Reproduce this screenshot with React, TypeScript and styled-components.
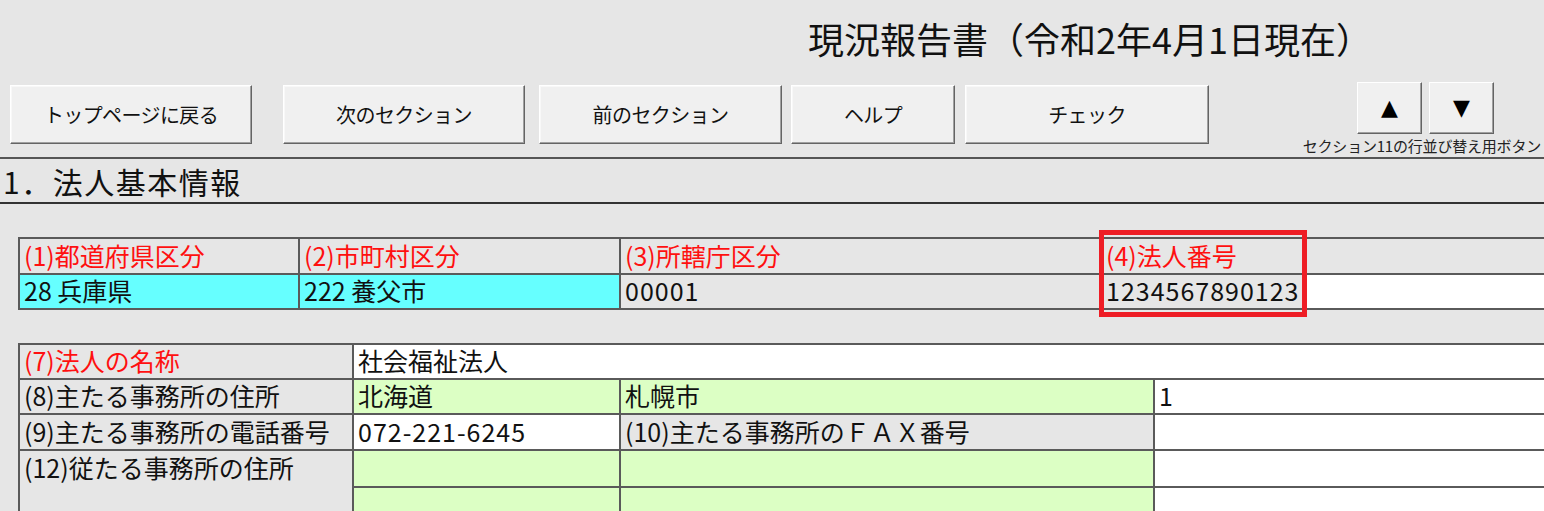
import React from "react";
import styled, { createGlobalStyle } from "styled-components";

const Global = createGlobalStyle`
  html, body { margin: 0; padding: 0; background: #e6e6e6; overflow: hidden; }
  body { font-family: "Noto Sans CJK JP", "Noto Sans", sans-serif; color: #111; }
  * { box-sizing: border-box; }
`;

const Page = styled.div`
  width: 1544px;
  height: 511px;
  overflow: hidden;
  display: flex;
  flex-direction: column;
  & > * { flex-shrink: 0; }
`;

const TitleBar = styled.div`
  height: 75px;
  display: flex;
  align-items: center;
  padding-left: 808px;
`;

const Title = styled.h1`
  margin: 0;
  font-size: 36px;
  font-weight: 400;
  line-height: 1;
  white-space: nowrap;
`;

const Toolbar = styled.div`
  height: 82px;
  display: flex;
  align-items: flex-start;
`;

const XButton = styled.button<{ $w: number; $ml: number }>`
  width: ${(p) => p.$w}px;
  margin-left: ${(p) => p.$ml}px;
  margin-top: 10px;
  height: 59px;
  padding: 0;
  background: #f0f0f0;
  border: 1px solid;
  border-color: #ffffff #646464 #646464 #ffffff;
  box-shadow: inset -1px -1px 0 #a0a0a0, inset 1px 1px 0 #f8f8f8;
  font-family: "Noto Sans CJK JP", sans-serif;
  font-size: 20px;
  color: #111;
  letter-spacing: -0.6px;
  white-space: nowrap;
`;

const ArrowGroup = styled.div`
  margin-left: auto;
  margin-right: 3px;
  margin-top: 7px;
  display: flex;
  flex-direction: column;
  align-items: center;
`;

const ArrowRow = styled.div`
  display: flex;
  gap: 7px;
  margin-left: 7px;
`;

const ArrowButton = styled.button`
  width: 65px;
  height: 52px;
  padding: 0;
  background: #f0f0f0;
  border: 1px solid;
  border-color: #ffffff #646464 #646464 #ffffff;
  box-shadow: inset -1px -1px 0 #a0a0a0;
  font-family: "DejaVu Sans", sans-serif;
  font-size: 22px;
  color: #000;
  line-height: 1;
`;

const Caption = styled.div`
  margin-top: 3px;
  font-size: 15px;
  line-height: 18px;
  letter-spacing: -0.2px;
  white-space: nowrap;
  color: #222;
`;

const SectionBar = styled.div`
  height: 47px;
  border-top: 2px solid #555;
  border-bottom: 2px solid #333;
  display: flex;
  align-items: center;
  padding-left: 3px;
`;

const SectionTitle = styled.h2`
  margin: 0;
  font-size: 30px;
  font-weight: 400;
  line-height: 1;
  letter-spacing: 1.5px;
`;

const Grid = styled.div<{ $cols: string; $rows: string; $mt: number }>`
  display: grid;
  grid-template-columns: ${(p) => p.$cols};
  grid-template-rows: ${(p) => p.$rows};
  margin-top: ${(p) => p.$mt}px;
  margin-left: 18px;
  width: 1560px;
  border-top: 2px solid #5a5a5a;
  border-left: 2px solid #5a5a5a;
`;

const bgMap = {
  gray: "#e6e6e6",
  cyan: "#66ffff",
  green: "#dcffc4",
  white: "#ffffff",
};

const Cell = styled.div<{
  $bg?: keyof typeof bgMap;
  $red?: boolean;
  $num?: boolean;
  $span?: number;
  $rows?: number;
  $top?: boolean;
}>`
  position: relative;
  background: ${(p) => bgMap[p.$bg || "gray"]};
  color: ${(p) => (p.$red ? "#ff1010" : "#111")};
  grid-column: span ${(p) => p.$span || 1};
  grid-row: span ${(p) => p.$rows || 1};
  border-right: 2px solid #5a5a5a;
  border-bottom: 2px solid #5a5a5a;
  display: flex;
  align-items: ${(p) => (p.$top ? "flex-start" : "center")};
  padding-left: 4px;
  padding-bottom: ${(p) => (p.$top ? "0" : "3px")};
  padding-top: 0;
  font-size: 25px;
  letter-spacing: ${(p) => (p.$num ? "1px" : "0")};
  line-height: 32px;
  white-space: nowrap;
`;

const Highlight = styled.div`
  position: absolute;
  top: -9px;
  left: -3px;
  width: 208px;
  height: 87px;
  border: 5px solid #ee1d25;
  pointer-events: none;
  z-index: 2;
`;

export default function App() {
  return (
    <Page>
      <Global />
      <TitleBar>
        <Title>現況報告書（令和2年4月1日現在）</Title>
      </TitleBar>
      <Toolbar>
        <XButton $w={242} $ml={10}>トップページに戻る</XButton>
        <XButton $w={242} $ml={31}>次のセクション</XButton>
        <XButton $w={243} $ml={14}>前のセクション</XButton>
        <XButton $w={164} $ml={9}>ヘルプ</XButton>
        <XButton $w={244} $ml={10}>チェック</XButton>
        <ArrowGroup>
          <ArrowRow>
            <ArrowButton>▲</ArrowButton>
            <ArrowButton>▼</ArrowButton>
          </ArrowRow>
          <Caption>セクション11の行並び替え用ボタン</Caption>
        </ArrowGroup>
      </Toolbar>
      <SectionBar>
        <SectionTitle>1．法人基本情報</SectionTitle>
      </SectionBar>

      <Grid $cols="280px 321px 481px 205px 1fr" $rows="36px 35px" $mt={33}>
        <Cell $red>(1)都道府県区分</Cell>
        <Cell $red>(2)市町村区分</Cell>
        <Cell $red>(3)所轄庁区分</Cell>
        <Cell $red>
          (4)法人番号
          <Highlight />
        </Cell>
        <Cell />
        <Cell $bg="cyan">28 兵庫県</Cell>
        <Cell $bg="cyan">222 養父市</Cell>
        <Cell $num>00001</Cell>
        <Cell $num>1234567890123</Cell>
        <Cell $bg="white" />
      </Grid>

      <Grid $cols="334px 267px 534px 1fr" $rows="35px 35px 36px 37px 37px" $mt={33}>
        <Cell $red>(7)法人の名称</Cell>
        <Cell $bg="white" $span={3}>社会福祉法人</Cell>
        <Cell>(8)主たる事務所の住所</Cell>
        <Cell $bg="green">北海道</Cell>
        <Cell $bg="green">札幌市</Cell>
        <Cell $bg="white">1</Cell>
        <Cell>(9)主たる事務所の電話番号</Cell>
        <Cell $bg="white" $num>072-221-6245</Cell>
        <Cell>(10)主たる事務所のＦＡＸ番号</Cell>
        <Cell $bg="white" />
        <Cell $rows={2} $top>(12)従たる事務所の住所</Cell>
        <Cell $bg="green" />
        <Cell $bg="green" />
        <Cell $bg="white" />
        <Cell $bg="green" />
        <Cell $bg="green" />
        <Cell $bg="white" />
      </Grid>
    </Page>
  );
}
